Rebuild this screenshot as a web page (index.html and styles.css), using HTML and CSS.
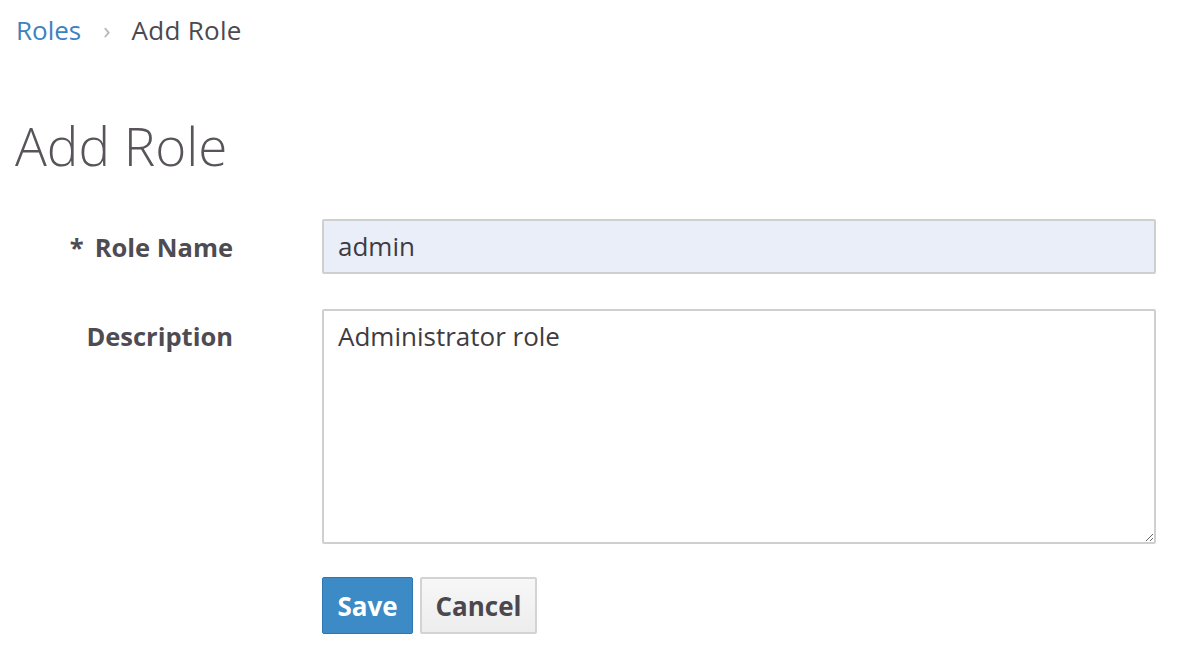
FILE: index.html
```html
<!DOCTYPE html>
<html>
<head>
<meta charset="utf-8">
<link rel="stylesheet" href="styles.css">
</head>
<body>
<div class="page">
  <nav class="breadcrumb">
    <a class="crumb-link" href="#">Roles</a>
    <span class="crumb-sep">›</span>
    <span class="crumb-current">Add Role</span>
  </nav>
  <h1 class="title">Add Role</h1>
  <form class="form">
    <div class="row row-input">
      <label class="label"><span class="req">*</span>Role Name</label>
      <input class="field input" type="text" value="admin">
    </div>
    <div class="row row-textarea">
      <label class="label label-top">Description</label>
      <textarea class="field textarea">Administrator role</textarea>
    </div>
    <div class="row row-buttons">
      <span class="label"></span>
      <div class="buttons">
        <button type="button" class="btn btn-primary">Save</button>
        <button type="button" class="btn btn-default">Cancel</button>
      </div>
    </div>
  </form>
</div>
</body>
</html>
```

FILE: styles.css
```css
html, body {
  margin: 0;
  padding: 0;
  background: #ffffff;
}
body {
  font-family: "Open Sans", "Liberation Sans", sans-serif;
  color: #4a4a4e;
}
.page {
  padding: 12px 0 0 15px;
}
.breadcrumb {
  display: flex;
  align-items: center;
  font-size: 26px;
  line-height: 36px;
  height: 36px;
}
.crumb-link {
  color: #3d82c0;
  text-decoration: none;
  padding-left: 1px;
}
.crumb-sep {
  color: #b4b4b4;
  margin: 0 21px 0 22px;
  font-size: 24px;
}
.crumb-current {
  color: #4b4950;
  letter-spacing: 0.3px;
}
.title {
  margin: 66px 0 0 0;
  font-size: 53px;
  font-weight: 300;
  line-height: 64px;
  color: #58545a;
}
.form {
  margin-top: 41px;
  display: flex;
  flex-direction: column;
  gap: 35px;
  width: 1141px;
}
.row {
  display: grid;
  grid-template-columns: 218px 834px;
  column-gap: 89px;
  align-items: center;
}
.row-textarea {
  align-items: start;
}
.label {
  text-align: right;
  font-size: 25.5px;
  font-weight: 700;
  color: #4f4b52;
  line-height: 36px;
}
.req {
  margin-right: 11px;
}
.label-top {
  padding-top: 9px;
}
.field {
  box-sizing: border-box;
  width: 834px;
  border: 2px solid #cfcfcf;
  border-radius: 2px;
  font-family: "Open Sans", "Liberation Sans", sans-serif;
  font-size: 26px;
  color: #3f3b42;
  padding: 0 14px;
  margin: 0;
  outline: none;
}
.input {
  height: 55px;
  background: #eaeef8;
  line-height: 51px;
  padding-bottom: 2px;
}
.textarea {
  height: 235px;
  background: #ffffff;
  padding-top: 7px;
  line-height: 36px;
  resize: vertical;
}
.row-buttons {
  margin-top: -2px;
}
.buttons {
  display: flex;
  gap: 7px;
}
.btn {
  font-family: "Open Sans", "Liberation Sans", sans-serif;
  font-size: 26px;
  font-weight: 700;
  height: 57px;
  border-radius: 2px;
  padding: 0;
  cursor: pointer;
}
.btn-primary {
  width: 91px;
  background: #3c8ac6;
  border: 1px solid #2f76b0;
  color: #ffffff;
}
.btn-default {
  width: 117px;
  background: linear-gradient(#f7f7f7, #ededed);
  border: 2px solid #d3d3d3;
  color: #4b474e;
}
```
